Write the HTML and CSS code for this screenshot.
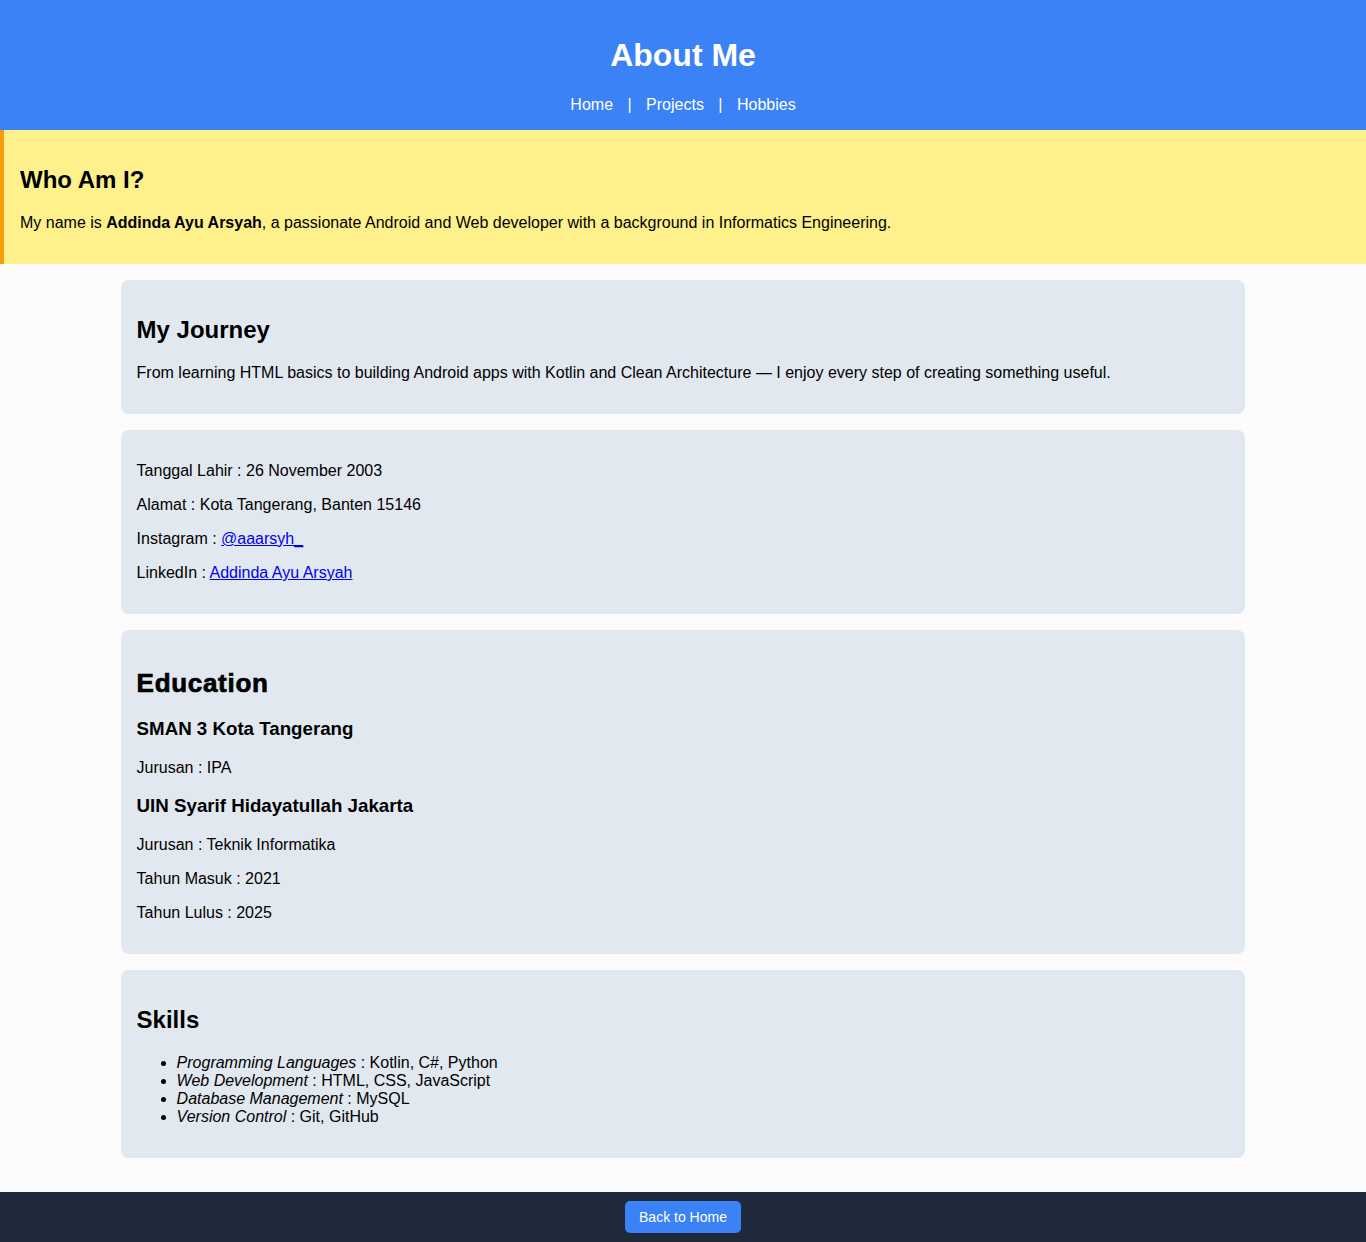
FILE: index.html
```html
<!DOCTYPE html>
<html lang="en">
<head>
<meta charset="utf-8">
<title>About Me</title>
<link rel="stylesheet" href="styles.css">
</head>
<body>
<header class="site-header">
  <h1 class="site-title">About Me</h1>
  <nav class="site-nav"><a href="#">Home</a> | <a href="#">Projects</a> | <a href="#">Hobbies</a></nav>
</header>

<section class="intro">
  <h2>Who Am I?</h2>
  <p>My name is <strong>Addinda Ayu Arsyah</strong>, a passionate Android and Web developer with a background in Informatics Engineering.</p>
</section>

<main class="content">
  <section class="card">
    <h2>My Journey</h2>
    <p>From learning HTML basics to building Android apps with Kotlin and Clean Architecture — I enjoy every step of creating something useful.</p>
  </section>

  <section class="card">
    <p>Tanggal Lahir : 26 November 2003</p>
    <p>Alamat : Kota Tangerang, Banten 15146</p>
    <p>Instagram : <a href="#">@aaarsyh_</a></p>
    <p>LinkedIn : <a href="#">Addinda Ayu Arsyah</a></p>
  </section>

  <section class="card">
    <h2 class="edu-title">Education</h2>
    <h3>SMAN 3 Kota Tangerang</h3>
    <p>Jurusan : IPA</p>
    <h3>UIN Syarif Hidayatullah Jakarta</h3>
    <p>Jurusan : Teknik Informatika</p>
    <p>Tahun Masuk : 2021</p>
    <p>Tahun Lulus : 2025</p>
  </section>

  <section class="card">
    <h2>Skills</h2>
    <ul class="skills">
      <li><em>Programming Languages</em> : Kotlin, C#, Python</li>
      <li><em>Web Development</em> : HTML, CSS, JavaScript</li>
      <li><em>Database Management</em> : MySQL</li>
      <li><em>Version Control</em> : Git, GitHub</li>
    </ul>
  </section>
</main>

<footer class="site-footer">
  <a class="back-btn" href="#">Back to Home</a>
</footer>
</body>
</html>
```

FILE: styles.css
```css
html, body {
  margin: 0;
  padding: 0;
}

body {
  font-family: "Liberation Sans", Arial, sans-serif;
  font-size: 16px;
  color: #000;
  background: #fcfcfc;
}

.site-header {
  background: #3b82f6;
  color: #fff;
  text-align: center;
  padding: 16px 0;
}

.site-title {
  font-size: 32px;
  margin: 21px 0 22px;
}

.site-nav {
  color: #fff;
}

.site-nav a {
  color: #fff;
  text-decoration: none;
  margin: 0 10px;
}

.intro {
  background: #fef08a;
  border-left: 4px solid #f59e0b;
  padding: 16px;
}

.intro h2,
.card h2 {
  font-size: 24px;
  margin: 20px 0;
}

.intro p,
.card p {
  margin: 16px 0;
}

.content {
  padding-bottom: 18px;
}

.card {
  width: 80%;
  margin: 16px auto;
  padding: 16px;
  background: #e2e8f0;
  border-radius: 8px;
}

.card h2.edu-title {
  font-size: 26px;
  letter-spacing: 0.7px;
  -webkit-text-stroke: 0.7px #000;
  margin: 22px 0 19px;
}

.card h3 {
  font-size: 18.72px;
  margin: 18.72px 0;
}

.skills {
  margin: 16px 0;
  padding-left: 40px;
}

.site-footer {
  background: #1e293b;
  text-align: center;
  padding: 9px 0;
}

.back-btn {
  display: inline-block;
  background: #3b82f6;
  color: #fff;
  font-size: 14px;
  line-height: 16px;
  padding: 8px 14px;
  border-radius: 5px;
  text-decoration: none;
}
```
